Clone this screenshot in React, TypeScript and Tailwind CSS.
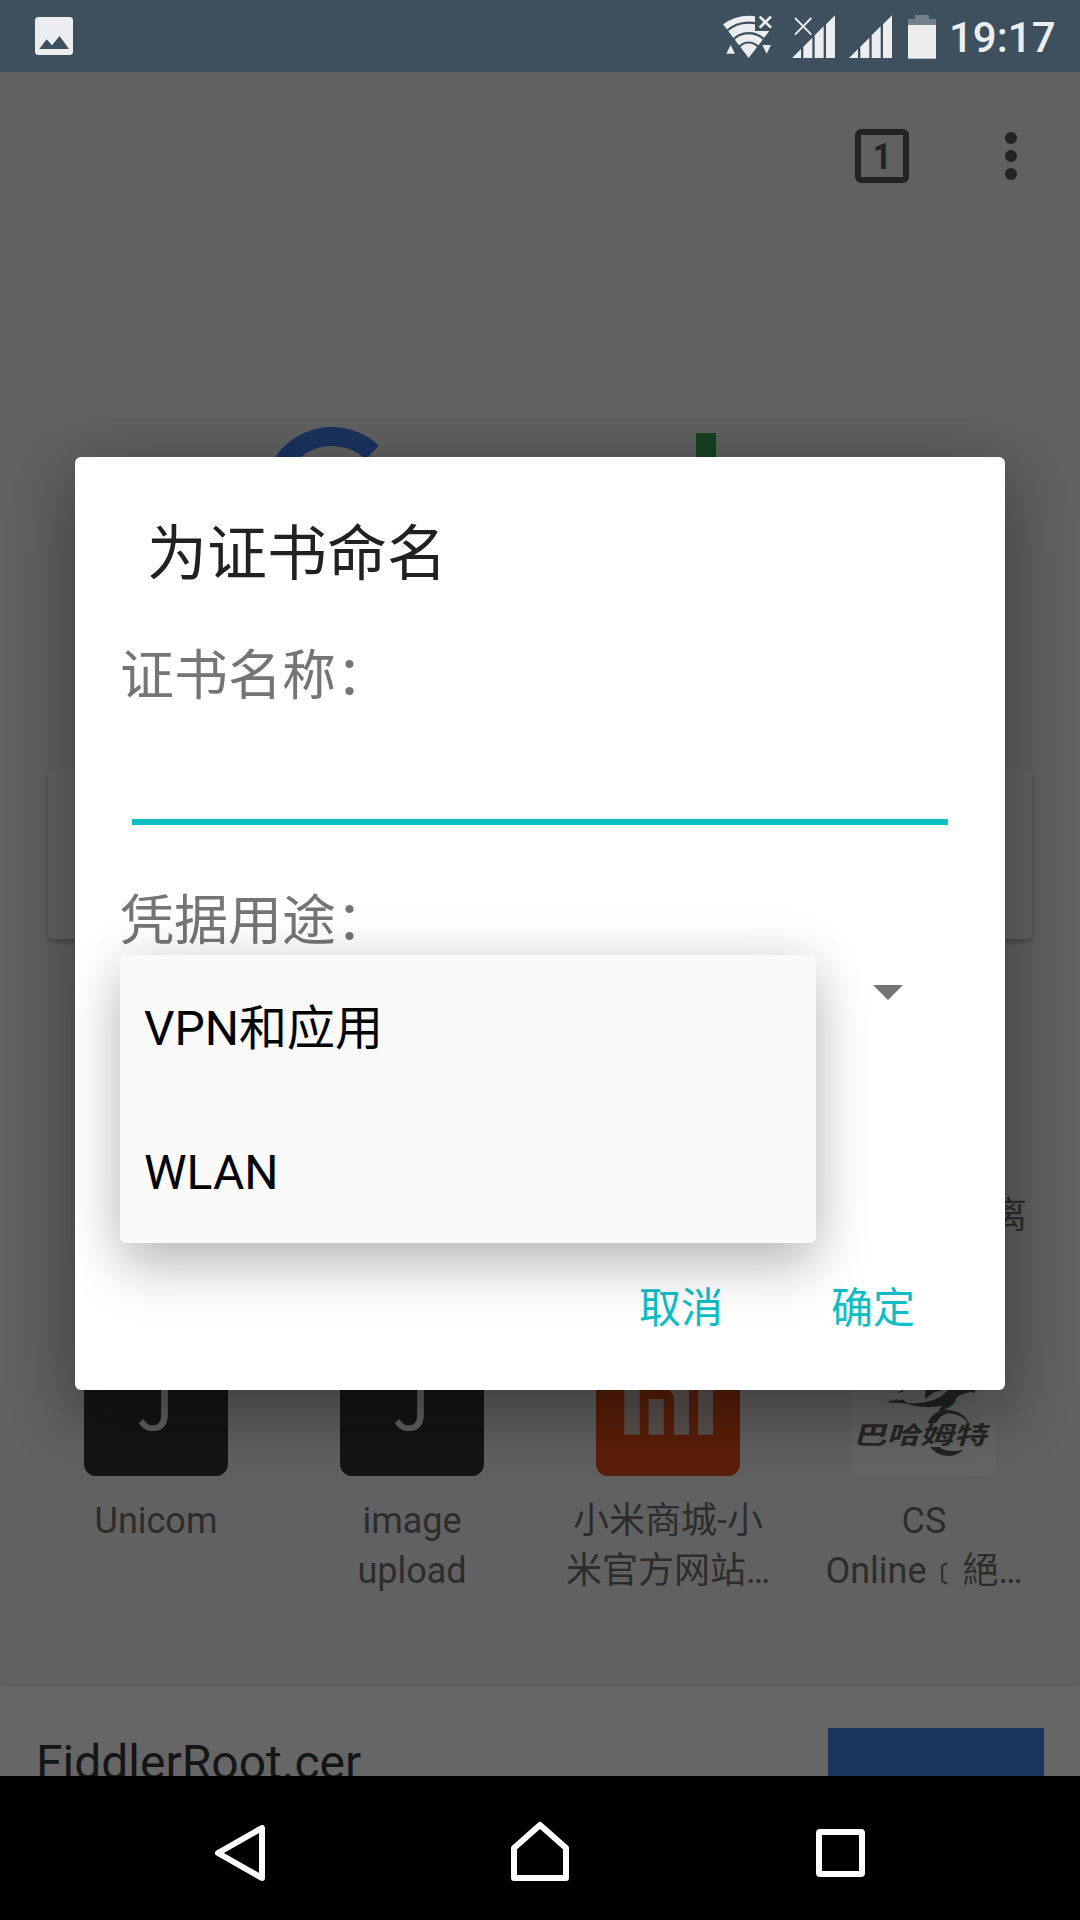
import React from 'react';

function WifiIcon() {
  return (
    <svg className="h-[45px] w-[50px]" viewBox="66 39 150 135">
      <path d="M146 171 L69 70 A127 127 0 0 1 223 70 Z" fill="#ebedef" />
      <g fill="none" stroke="#3e4f5e" strokeWidth="6.5">
        <path d="M76 94 A98.500 98.500 0 0 1 216 94" />
        <path d="M96 119 A66.500 66.500 0 0 1 196 119" />
        <path d="M114 143 A37 37 0 0 1 178 143" />
      </g>
      <path d="M165 36h60v54h-60z" fill="#3e4f5e" />
      <path d="M179 47l34 33M213 47l-34 33" stroke="#ebedef" strokeWidth="8" />
      <path d="M92 132l13 26H79zM187 132h26l-13 26z" fill="#ebedef" />
    </svg>
  );
}

function SignalIcon({ crossed = false }: { crossed?: boolean }) {
  return (
    <svg className="h-[45px] w-[43px]" viewBox="276 39 129 135">
      <path
        d="M276 171L303 144V171zM310 137L337 110V171H310zM344 103L371 76V171H344zM378 70L405 43V171H378z"
        fill="#ebedef"
      />
      {crossed && <path d="M285 51l49 50M334 51l-49 50" stroke="#ebedef" strokeWidth="5.5" />}
    </svg>
  );
}

function BatteryIcon() {
  return (
    <svg className="h-[45px] w-[28px]" viewBox="624 39 84 135">
      <path d="M645 42h42v12h21v20h-84V54h21z" fill="#73808b" />
      <path d="M624 72h84v101h-84z" fill="#ebedef" />
    </svg>
  );
}

function StatusBar() {
  return (
    <header className="flex h-[72px] shrink-0 items-center bg-[#3e4f5e] pl-[35px] text-[#ebedef]">
      <svg className="h-[38px] w-[38px]" viewBox="0 0 38 38">
        <rect width="38" height="38" rx="3.500" fill="#ebedef" />
        <path d="M4.300 32L11.600 22.300L17 28.300L24.500 19L34 32z" fill="#3e4f5e" />
      </svg>
      <div className="ml-auto flex w-[358px] items-center">
        <WifiIcon />
        <div className="ml-[20px]"><SignalIcon crossed /></div>
        <div className="ml-[14px]"><SignalIcon /></div>
        <div className="ml-[16px]"><BatteryIcon /></div>
        <span className="ml-[13px] pt-[3px] text-[42px] leading-[48px] font-medium">19:17</span>
      </div>
    </header>
  );
}

function MiLogo() {
  return (
    <svg className="h-full w-full rounded-[12px]" viewBox="168 -114 432 432">
      <g fill="#5b524f">
        <path d="M253 0H299V194H253z" />
        <path d="M326 87H371V194H326z" />
        <path d="M299 0H385Q447 0 447 62V194H402V94Q402 66 380 56H299z" />
        <path d="M474 0H519V194H474z" />
      </g>
    </svg>
  );
}

function BahamutLogo() {
  return (
    <div className="relative h-full w-full">
      <svg className="h-full w-full" viewBox="936 -114 432 432">
        <g fill="#242424">
          <path d="M1041 98L1060 88L1056 94L1075 86L1072 93L1088 88L1100 98Q1160 106 1205 78L1235 50L1309 50L1304 68L1290 66L1262 74L1250 82Q1246 104 1222 112L1212 124L1203 122L1196 133L1198 118L1206 108Q1160 114 1122 107Q1090 96 1041 98z" />
          <path d="M1155 88L1157 40L1225 40L1204 62L1184 66z" />
          <path d="M1070 70L1092 58L1088 66z" />
          <path d="M1162 159Q1182 118 1224 120Q1274 124 1288 163Q1264 130 1226 130Q1200 136 1188 159z" />
          <path d="M1170 231H1199Q1220 250 1270 239Q1248 260 1220 258Q1188 254 1170 231z" />
        </g>
        <path d="M1250 82Q1248 108 1212 120L1216 115Q1244 102 1246 84z" fill="#12454c" />
      </svg>
      <span className="absolute top-[82px] left-[4px] origin-center -skew-x-12 scale-y-[0.74] text-[33.5px] leading-[40px] font-bold whitespace-nowrap text-[#272727] font-['Noto_Sans_CJK_TC',sans-serif]">
        巴哈姆特
      </span>
    </div>
  );
}

function Letter() {
  return (
    <span className="pr-[1px] text-[72px] leading-[134px] text-[#626260] font-['Noto_Sans_CJK_SC',sans-serif]">J</span>
  );
}

function Site({ tile, color, lines }: { tile: React.ReactNode; color: string; lines: string[] }) {
  return (
    <div className="flex w-[256px] flex-col items-center">
      <div className={'flex h-[144px] w-[144px] justify-center rounded-[12px] ' + color}>{tile}</div>
      <div className="mt-[20px] text-center text-[36px] leading-[50px] text-[#2c2c2c]">
        {lines.map((l) => (
          <div key={l} className="h-[50px] whitespace-nowrap">{l}</div>
        ))}
      </div>
    </div>
  );
}

function BrowserPage() {
  return (
    <div className="flex h-full flex-col">
      <div className="flex h-[168px] shrink-0 items-center justify-end pr-[63px]">
        <div className="flex h-[54px] w-[54px] items-center justify-center rounded-[6px] border-[6px] border-[#232323] text-[36px] leading-none font-bold text-[#232323]">
          <span className="scale-x-90 pt-[2px]">1</span>
        </div>
        <div className="ml-[96px] flex w-[12px] flex-col gap-[6px]">
          <i className="h-[12px] rounded-full bg-[#232323]" />
          <i className="h-[12px] rounded-full bg-[#232323]" />
          <i className="h-[12px] rounded-full bg-[#232323]" />
        </div>
      </div>
      <div className="mt-[187px] flex h-[342px] shrink-0 items-start pl-[263px]">
        <svg className="h-[138px] w-[138px]" viewBox="263 427 138 138">
          <path d="M372.500 452.400A59.500 59.500 0 1 0 391.500 496H335" fill="none" stroke="#1a3460" strokeWidth="19" />
        </svg>
        <div className="mt-[6px] ml-[295px] h-[130px] w-[20px] bg-[#184221]" />
      </div>
      <div className="mx-[48px] h-[170px] shrink-0 rounded-[6px] bg-[#636363] shadow-[0_3px_5px_rgba(0,0,0,0.28)]" />
      <div className="mt-[252px] flex h-[50px] shrink-0 justify-end pr-[53px] text-[36px] leading-[50px] text-[#2c2c2c]">离</div>
      <div className="mt-[91px] flex h-[354px] shrink-0 px-[28px]">
        <Site tile={<Letter />} color="bg-[#151515]" lines={['Unicom']} />
        <Site tile={<Letter />} color="bg-[#151515]" lines={['image', 'upload']} />
        <Site tile={<MiLogo />} color="bg-[#5b1f0a]" lines={['小米商城-小', '米官方网站…']} />
        <Site tile={<BahamutLogo />} color="bg-[#656565]" lines={['CS', 'Online﹝絕…']} />
      </div>
      <div className="flex flex-1 justify-between bg-[#666666] pr-[36px] pl-[36px] shadow-[0_-1px_3px_rgba(0,0,0,0.1)]">
        <span className="mt-[47px] text-[48px] leading-[60px] text-[#151515]">FiddlerRoot.cer</span>
        <div className="mt-[42px] w-[216px] bg-[#1a3460]" />
      </div>
    </div>
  );
}

function UsageMenu() {
  return (
    <ul className="absolute top-[498px] left-[45px] h-[288px] w-[696px] rounded-[6px] bg-[#fafafa] pt-[2px] pl-[24px] text-[48px] leading-[144px] text-black shadow-[0_0_54px_rgba(0,0,0,0.11),0_27px_54px_rgba(0,0,0,0.21)]">
      <li className="h-[144px]">VPN和应用</li>
      <li className="h-[144px]">WLAN</li>
    </ul>
  );
}

function CertificateDialog() {
  return (
    <section className="absolute top-[385px] left-[75px] flex h-[933px] w-[930px] flex-col rounded-[6px] bg-white shadow-[0_0_60px_rgba(0,0,0,0.14),0_30px_66px_rgba(0,0,0,0.28)]">
      <h1 className="mt-[56px] ml-[72px] h-[84px] text-[60px] leading-[84px] text-[#212121]">为证书命名</h1>
      <label className="mt-[42px] ml-[45px] h-[76px] text-[54px] leading-[76px] text-[#757575]">证书名称：</label>
      <div className="mt-[32px] ml-[57px] h-[78px] w-[816px] border-b-[6px] border-[#0dbec6]" />
      <label className="mt-[59px] ml-[45px] h-[76px] text-[54px] leading-[76px] text-[#757575]">凭据用途：</label>
      <svg className="mt-[25px] ml-[798px] h-[15px] w-[30px]" viewBox="0 0 30 15">
        <path d="M0 0h30L15 15z" fill="#757575" />
      </svg>
      <div className="mt-auto mb-[51px] flex justify-end gap-[108px] pr-[90px] text-[42px] leading-[60px] text-[#0dbec6]">
        <button>取消</button>
        <button>确定</button>
      </div>
      <UsageMenu />
    </section>
  );
}

function NavigationBar() {
  return (
    <nav className="flex h-[144px] shrink-0 items-start bg-black pl-[215px]">
      <svg className="mt-[49px] h-[56px] w-[50px]" viewBox="215 1825 50 56" fill="none" stroke="white" strokeWidth="6" strokeLinejoin="round">
        <path d="M218 1853L262 1828V1878z" />
      </svg>
      <svg className="mt-[45px] ml-[246px] h-[60px] w-[58px]" viewBox="511 1821 58 60" fill="none" stroke="white" strokeWidth="6" strokeLinejoin="round">
        <path d="M514 1878V1848L540 1825L566 1848V1878z" />
      </svg>
      <div className="mt-[53px] ml-[247px] h-[48px] w-[49px] rounded-[4px] border-[6px] border-white" />
    </nav>
  );
}

export default function App() {
  return (
    <div className="flex h-[1920px] w-[1080px] flex-col overflow-hidden bg-[#616161] font-[Roboto,'Noto_Sans_CJK_SC',sans-serif]">
      <StatusBar />
      <main className="relative h-[1704px] shrink-0 overflow-hidden">
        <BrowserPage />
        <CertificateDialog />
      </main>
      <NavigationBar />
    </div>
  );
}
